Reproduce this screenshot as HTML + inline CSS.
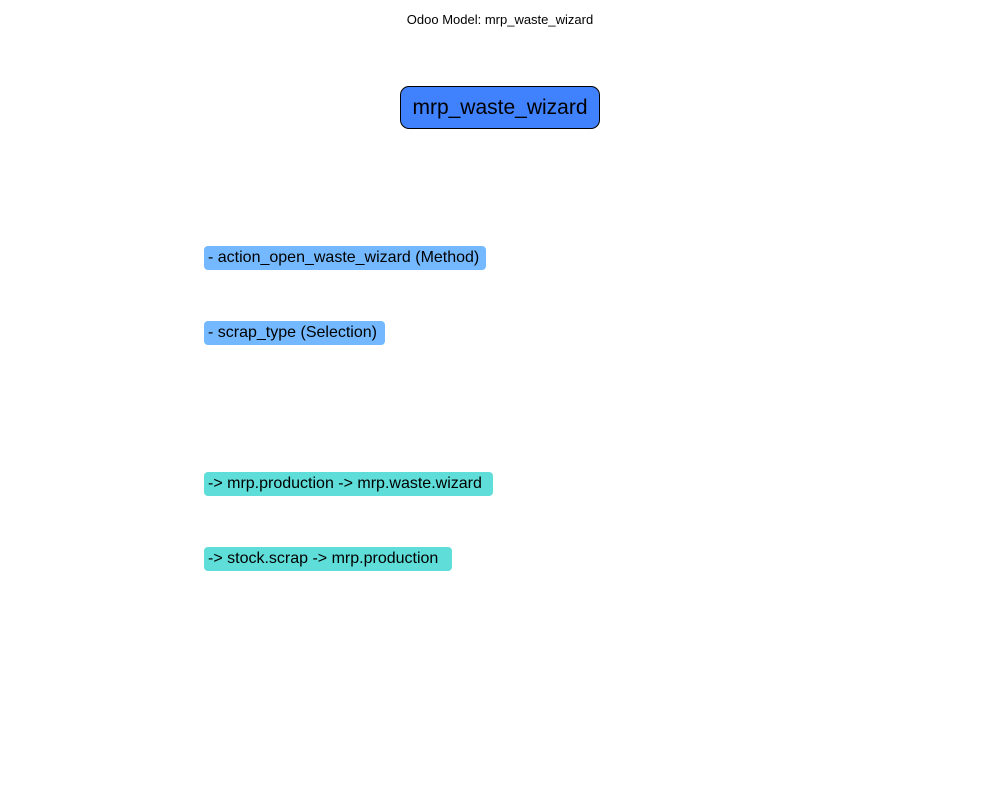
<!DOCTYPE html>
<html><head><meta charset="utf-8"><style>
body{margin:0;width:1000px;height:800px;background:#fff;position:relative;font-family:"Liberation Sans",sans-serif;color:#000;overflow:hidden}
.b{position:absolute;box-sizing:border-box;white-space:nowrap;line-height:1}
.t{left:0;width:1000px;top:13px;text-align:center;font-size:13px}
.m{left:400px;top:86px;width:200px;height:43px;background:#4081fe;border:1.5px solid #000;border-radius:9px;font-size:21px;text-align:center;padding-top:10px}
.a{left:204px;height:24px;border-radius:4px;font-size:16px;padding:4px 0 0 4px;background:#74b9ff}
.r{background:#5fddd8}
</style></head><body>
<div class="b t">Odoo Model: mrp_waste_wizard</div>
<div class="b m">mrp_waste_wizard</div>
<div class="b a" style="top:246px;width:282px">- action_open_waste_wizard (Method)</div>
<div class="b a" style="top:321px;width:181px">- scrap_type (Selection)</div>
<div class="b a r" style="top:472px;width:289px">-&gt; mrp.production -&gt; mrp.waste.wizard</div>
<div class="b a r" style="top:547px;width:248px">-&gt; stock.scrap -&gt; mrp.production</div>
</body></html>
